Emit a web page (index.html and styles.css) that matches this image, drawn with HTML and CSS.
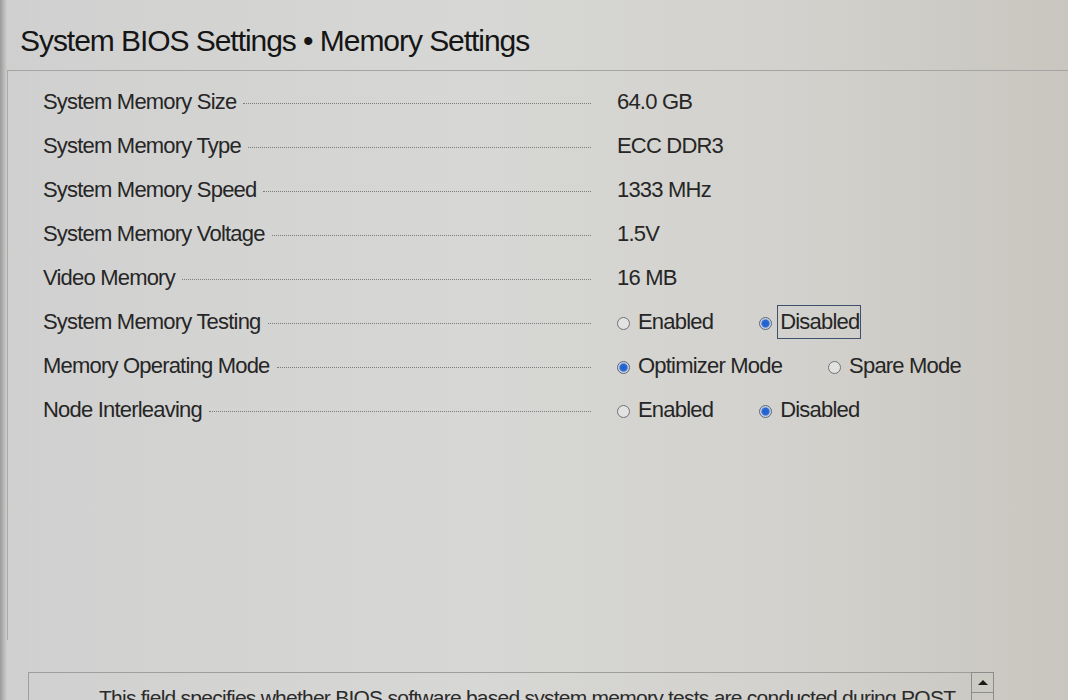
FILE: index.html
```html
<!DOCTYPE html>
<html lang="en">
<head>
<meta charset="utf-8">
<title>System BIOS Settings • Memory Settings</title>
<link rel="stylesheet" href="styles.css">
</head>
<body>
<div class="screen">
  <h1 class="title">System BIOS Settings • Memory Settings</h1>
  <div class="panel">
    <div class="rows">
      <div class="row"><div class="label"><span>System Memory Size</span><i class="leader"></i></div><div class="value">64.0 GB</div></div>
      <div class="row"><div class="label"><span>System Memory Type</span><i class="leader"></i></div><div class="value">ECC DDR3</div></div>
      <div class="row"><div class="label"><span>System Memory Speed</span><i class="leader"></i></div><div class="value">1333 MHz</div></div>
      <div class="row"><div class="label"><span>System Memory Voltage</span><i class="leader"></i></div><div class="value">1.5V</div></div>
      <div class="row"><div class="label"><span>Video Memory</span><i class="leader"></i></div><div class="value">16 MB</div></div>
      <div class="row"><div class="label"><span>System Memory Testing</span><i class="leader"></i></div>
        <div class="value options">
          <span class="opt"><i class="radio"></i><span>Enabled</span></span>
          <span class="opt"><i class="radio on"></i><span class="focus">Disabled</span></span>
        </div>
      </div>
      <div class="row"><div class="label"><span>Memory Operating Mode</span><i class="leader"></i></div>
        <div class="value options">
          <span class="opt"><i class="radio on"></i><span>Optimizer Mode</span></span>
          <span class="opt"><i class="radio"></i><span>Spare Mode</span></span>
        </div>
      </div>
      <div class="row"><div class="label"><span>Node Interleaving</span><i class="leader"></i></div>
        <div class="value options">
          <span class="opt"><i class="radio"></i><span>Enabled</span></span>
          <span class="opt"><i class="radio on"></i><span>Disabled</span></span>
        </div>
      </div>
    </div>
  </div>
  <div class="help">
    <div class="help-text">This field specifies whether BIOS software based system memory tests are conducted during POST.</div>
    <div class="scroll"><div class="up"><i class="tri"></i></div></div>
  </div>
</div>
</body>
</html>
```

FILE: styles.css
```css
html, body {
  margin: 0;
  padding: 0;
}
body {
  width: 1068px;
  height: 700px;
  overflow: hidden;
  font-family: "Liberation Sans", Arial, sans-serif;
  color: #1f1f1f;
  background:
    linear-gradient(to right, #9a9a98 0, #b9b9b7 4px, #cfcfcf 7px, rgba(207,207,207,0) 40px),
    linear-gradient(to right, #d0d0d0 0%, #d7d7d5 45%, #d2d1cd 75%, #c9c6bf 100%);
}
.screen {
  height: 700px;
  padding-left: 7px;
  display: flex;
  flex-direction: column;
  box-sizing: border-box;
  overflow: hidden;
}
.title {
  flex: none;
  margin: 0;
  height: 70px;
  box-sizing: border-box;
  padding: 24px 0 0 13px;
  font-size: 30px;
  font-weight: normal;
  letter-spacing: -1.05px;
  line-height: 1.15;
  color: #151515;
}
.panel {
  height: 570px;
  flex: none;
  border-top: 1px solid #a4a4a2;
  border-left: 1px solid #aaaaa8;
  padding: 9px 0 0 35px;
  box-sizing: border-box;
}
.rows {
  display: flex;
  flex-direction: column;
}
.row {
  display: grid;
  grid-template-columns: 548px 1fr;
  column-gap: 26px;
  height: 44px;
  align-items: center;
  font-size: 22px;
  letter-spacing: -0.8px;
  color: #262626;
}
.label {
  display: flex;
  align-items: center;
  white-space: nowrap;
}
.leader {
  flex: 1;
  margin: 3px 0 0 7px;
  border-bottom: 1px dotted #7c7c7c;
}
.options {
  display: flex;
  align-items: center;
  gap: 46px;
}
.opt {
  display: flex;
  align-items: center;
  gap: 8px;
}
.radio {
  width: 13px;
  height: 13px;
  border-radius: 50%;
  border: 1px solid #6e7278;
  background: #e2e2e0;
  flex: none;
  margin-top: 2px;
  box-sizing: border-box;
}
.radio.on {
  border-color: #5d6675;
  background: radial-gradient(circle, #1e5cc8 0, #2a69d2 3.4px, #b9c6de 4.6px, #e7e9ec 6px);
}
.focus {
  border: 1.5px solid #3f4f6e;
  padding: 3px 1px 3px 2px;
  margin: -4px -3px -4px -3px;
}
.help {
  display: flex;
  margin: 32px 0 0 21px;
  width: 966px;
  height: 60px;
  flex: none;
}
.help-text {
  flex: 1;
  border: 1px solid #9e9e9c;
  border-right: none;
  padding: 13px 0 0 70px;
  font-size: 21px;
  letter-spacing: -0.75px;
  color: #2b2b2b;
  white-space: nowrap;
  overflow: hidden;
}
.scroll {
  width: 21px;
  border: 1px solid #8c8c8a;
  flex: none;
}
.up {
  height: 19px;
  border-bottom: 1px solid #8c8c8a;
  display: flex;
  align-items: center;
  justify-content: center;
}
.tri {
  width: 0;
  height: 0;
  border-left: 5px solid transparent;
  border-right: 5px solid transparent;
  border-bottom: 5px solid #1a1a1a;
}
```
